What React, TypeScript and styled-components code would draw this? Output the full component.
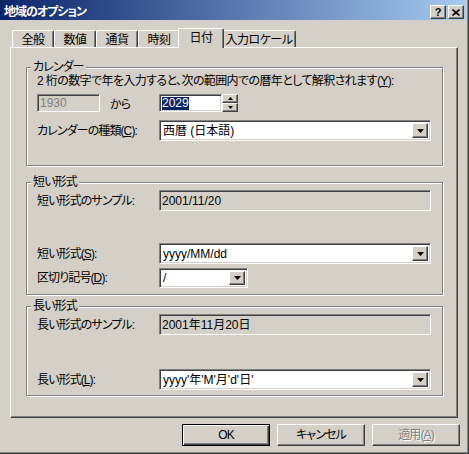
import React from 'react';
import styled, { createGlobalStyle, css } from 'styled-components';

const GlobalStyle = createGlobalStyle`
  html, body {
    margin: 0;
    padding: 0;
    background: #d4d0c8;
  }
  body {
    font-family: "Liberation Sans", "Noto Sans CJK JP", sans-serif;
    font-size: 12px;
    color: #000;
    font-feature-settings: "palt" 1;
  }
  * {
    box-sizing: border-box;
  }
`;

const raised = css`
  background: #d4d0c8;
  border: 1px solid;
  border-color: #fff #404040 #404040 #fff;
  box-shadow: inset -1px -1px 0 #808080;
`;

const sunken = css`
  border: 1px solid;
  border-color: #808080 #fff #fff #808080;
  box-shadow: inset 1px 1px 0 #404040, inset -1px -1px 0 #d4d0c8;
`;

const Window = styled.div`
  width: 469px;
  height: 454px;
  padding-right: 3px;
  display: flex;
  flex-direction: column;
  box-shadow: inset -1px -1px 0 #404040, inset -2px -2px 0 #808080;
`;

const TitleBar = styled.div`
  height: 20px;
  padding: 4px 2px 0 4px;
  display: flex;
  align-items: center;
  background: linear-gradient(to right, #0a246a, #a6caf0);
`;

const Title = styled.div`
  flex: 1;
  color: #fff;
  font-weight: bold;
  line-height: 14px;
  letter-spacing: -1px;
`;

const CaptionButton = styled.div`
  ${raised};
  width: 16px;
  height: 14px;
  margin-left: 2px;
  display: flex;
  align-items: center;
  justify-content: center;
  font-family: "Liberation Sans", sans-serif;
  font-weight: bold;
  font-size: 11px;
  line-height: 11px;
  padding-top: 1px;
`;

const TabRow = styled.div`
  margin-top: 8px;
  padding-left: 12px;
  display: flex;
  align-items: flex-end;
`;

const Tab = styled.div<{ $active?: boolean; $w: number }>`
  position: relative;
  width: ${(p) => p.$w}px;
  height: ${(p) => (p.$active ? 20 : 17)}px;
  margin: ${(p) => (p.$active ? '0 -2px -1px' : '0')};
  z-index: ${(p) => (p.$active ? 1 : 0)};
  background: #d4d0c8;
  border-top: 1px solid #fff;
  border-left: 1px solid #fff;
  border-right: 1px solid #404040;
  border-radius: 2px 2px 0 0;
  box-shadow: inset -1px 0 0 #808080;
  display: flex;
  justify-content: center;
  padding-top: 2px;
  line-height: 14px;
  letter-spacing: -0.5px;
`;

const Panel = styled.div`
  margin-left: 10px;
  width: 448px;
  height: 371px;
  border-top: 1px solid #fff;
  border-left: 1px solid #fff;
  border-right: 1px solid #404040;
  border-bottom: 1px solid #404040;
  box-shadow: inset -1px -1px 0 #808080;
  display: flex;
  flex-direction: column;
`;

const Group = styled.div<{ $h: number; $top: number }>`
  margin: ${(p) => p.$top}px 0 0 15px;
  width: 417px;
  height: ${(p) => p.$h}px;
  border: 1px solid #808080;
  box-shadow: inset 1px 1px 0 #fff, 1px 1px 0 #fff;
  padding: 0 11px 0 10px;
  display: flex;
  flex-direction: column;
`;

const Legend = styled.div`
  align-self: flex-start;
  margin: -7px 0 0 -6px;
  padding: 0 2px;
  height: 12px;
  line-height: 12px;
  background: #d4d0c8;
  letter-spacing: -0.9px;
`;

const TextLine = styled.div<{ $top: number }>`
  margin-top: ${(p) => p.$top}px;
  line-height: 14px;
  letter-spacing: -0.6px;
  white-space: nowrap;
`;

const Row = styled.div<{ $top: number; $h?: number }>`
  margin-top: ${(p) => p.$top}px;
  height: ${(p) => p.$h ?? 21}px;
  display: flex;
  align-items: center;
`;

const Label = styled.div`
  width: 122px;
  flex: none;
  line-height: 14px;
  letter-spacing: -0.9px;
`;

const Edit = styled.div<{ $disabled?: boolean }>`
  ${sunken};
  width: 63px;
  height: 18px;
  padding: 0 0 0 2px;
  display: flex;
  align-items: center;
  background: ${(p) => (p.$disabled ? '#d4d0c8' : '#fff')};
  color: ${(p) => (p.$disabled ? '#808080' : '#000')};
  line-height: 13px;
`;

const Selected = styled.span`
  background: #0a246a;
  color: #fff;
`;

const Kara = styled.div`
  width: 49px;
  margin-left: 10px;
  letter-spacing: -0.9px;
`;

const Spinner = styled.div`
  width: 16px;
  height: 18px;
  display: flex;
  flex-direction: column;
`;

const SpinButton = styled.div`
  ${raised};
  height: 9px;
  display: flex;
  align-items: center;
  justify-content: center;
`;

const Combo = styled.div<{ $w: number; $h?: number }>`
  ${sunken};
  width: ${(p) => p.$w}px;
  height: ${(p) => p.$h ?? 21}px;
  background: #fff;
  padding: 2px;
  display: flex;
  align-items: center;
`;

const ComboText = styled.div`
  flex: 1;
  padding-left: 1px;
  line-height: 14px;
  white-space: nowrap;
`;

const DropButton = styled.div`
  ${raised};
  width: 16px;
  height: 100%;
  display: flex;
  align-items: center;
  justify-content: center;
`;

const Sample = styled.div`
  ${sunken};
  box-shadow: inset 1px 1px 0 #404040;
  width: 272px;
  height: 21px;
  padding-left: 2px;
  display: flex;
  align-items: center;
  line-height: 14px;
`;

const ButtonRow = styled.div`
  margin-top: 6px;
  padding-right: 6px;
  display: flex;
  justify-content: flex-end;
  gap: 7px;
`;

const PushButton = styled.div<{ $default?: boolean; $disabled?: boolean }>`
  width: 88px;
  height: 22px;
  background: #d4d0c8;
  display: flex;
  align-items: center;
  justify-content: center;
  line-height: 14px;
  letter-spacing: -0.9px;
  color: ${(p) => (p.$disabled ? '#808080' : '#000')};
  text-shadow: ${(p) => (p.$disabled ? '1px 1px 0 #fff' : 'none')};
  ${(p) =>
    p.$default
      ? css`
          border: 1px solid #000;
          box-shadow: inset 1px 1px 0 #fff, inset -1px -1px 0 #404040, inset -2px -2px 0 #808080;
        `
      : css`
          border: 1px solid;
          border-color: #fff #404040 #404040 #fff;
          box-shadow: inset -1px -1px 0 #808080;
        `}
`;

const Arrow = ({ up, small }: { up?: boolean; small?: boolean }) => {
  const w = small ? 5 : 7;
  const h = small ? 3 : 4;
  const pts = up ? `0,${h} ${w},${h} ${w / 2},0` : `0,0 ${w},0 ${w / 2},${h}`;
  return (
    <svg width={w} height={h} viewBox={`0 0 ${w} ${h}`} style={{ display: 'block' }}>
      <polygon points={pts} fill="#000" />
    </svg>
  );
};

function Dropdown({ text, w, h }: { text: string; w: number; h?: number }) {
  return (
    <Combo $w={w} $h={h}>
      <ComboText>{text}</ComboText>
      <DropButton>
        <Arrow />
      </DropButton>
    </Combo>
  );
}

const tabs = [
  { label: '全般', w: 42 },
  { label: '数値', w: 42 },
  { label: '通貨', w: 42 },
  { label: '時刻', w: 42 },
  { label: '日付', w: 46, active: true },
  { label: '入力ロケール', w: 74 },
];

export default function App() {
  return (
    <>
      <GlobalStyle />
      <Window>
        <TitleBar>
          <Title>地域のオプション</Title>
          <CaptionButton>?</CaptionButton>
          <CaptionButton>
            <svg width="8" height="7" viewBox="0 0 8 7">
              <path d="M0.5 0.5 L7.5 6.5 M7.5 0.5 L0.5 6.5" stroke="#000" strokeWidth="1.6" />
            </svg>
          </CaptionButton>
        </TitleBar>

        <TabRow>
          {tabs.map((t) => (
            <Tab key={t.label} $w={t.w} $active={t.active}>
              {t.label}
            </Tab>
          ))}
        </TabRow>

        <Panel>
          <Group $top={19} $h={99}>
            <Legend>カレンダー</Legend>
            <TextLine $top={1}>
              2 桁の数字で年を入力すると、次の範囲内での暦年として解釈されます(<u>Y</u>):
            </TextLine>
            <Row $top={6} $h={18}>
              <Edit $disabled>1930</Edit>
              <Kara>から</Kara>
              <Edit>
                <Selected>2029</Selected>
              </Edit>
              <Spinner>
                <SpinButton>
                  <Arrow up small />
                </SpinButton>
                <SpinButton>
                  <Arrow small />
                </SpinButton>
              </Spinner>
            </Row>
            <Row $top={8}>
              <Label>
                カレンダーの種類(<u>C</u>):
              </Label>
              <Dropdown text="西暦 (日本語)" w={272} />
            </Row>
          </Group>

          <Group $top={16} $h={113}>
            <Legend>短い形式</Legend>
            <Row $top={2}>
              <Label>短い形式のサンプル:</Label>
              <Sample>2001/11/20</Sample>
            </Row>
            <Row $top={32}>
              <Label>
                短い形式(<u>S</u>):
              </Label>
              <Dropdown text="yyyy/MM/dd" w={272} />
            </Row>
            <Row $top={4} $h={20}>
              <Label>
                区切り記号(<u>D</u>):
              </Label>
              <Dropdown text="/" w={89} h={20} />
            </Row>
          </Group>

          <Group $top={11} $h={90}>
            <Legend>長い形式</Legend>
            <Row $top={2}>
              <Label>長い形式のサンプル:</Label>
              <Sample>2001年11月20日</Sample>
            </Row>
            <Row $top={34}>
              <Label>
                長い形式(<u>L</u>):
              </Label>
              <Dropdown text="yyyy'年'M'月'd'日'" w={272} />
            </Row>
          </Group>
        </Panel>

        <ButtonRow>
          <PushButton $default>OK</PushButton>
          <PushButton>キャンセル</PushButton>
          <PushButton $disabled>
            適用(<u>A</u>)
          </PushButton>
        </ButtonRow>
      </Window>
    </>
  );
}
